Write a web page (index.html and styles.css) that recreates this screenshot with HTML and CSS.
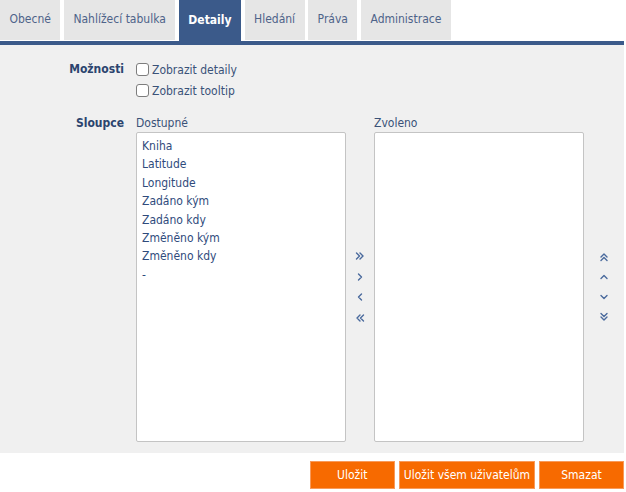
FILE: index.html
```html
<!DOCTYPE html>
<html lang="cs">
<head>
<meta charset="utf-8">
<title>Detaily</title>
<link rel="stylesheet" href="styles.css">
</head>
<body>
<div class="page">
  <nav class="tabs">
    <a class="tab">Obecné</a>
    <a class="tab">Nahlížecí tabulka</a>
    <a class="tab active">Detaily</a>
    <a class="tab">Hledání</a>
    <a class="tab">Práva</a>
    <a class="tab">Administrace</a>
  </nav>
  <div class="tabline"></div>
  <main class="panel">
    <div class="row options">
      <div class="label">Možnosti</div>
      <div class="checks">
        <label class="check"><span class="box"></span>Zobrazit detaily</label>
        <label class="check"><span class="box"></span>Zobrazit tooltip</label>
      </div>
    </div>
    <div class="row columns">
      <div class="label">Sloupce</div>
      <div class="picker">
        <div class="list-col">
          <div class="list-title">Dostupné</div>
          <ul class="listbox">
            <li>Kniha</li>
            <li>Latitude</li>
            <li>Longitude</li>
            <li>Zadáno kým</li>
            <li>Zadáno kdy</li>
            <li>Změněno kým</li>
            <li>Změněno kdy</li>
            <li>-</li>
          </ul>
        </div>
        <div class="arrows">
          <svg class="ico" viewBox="0 0 10 10"><path d="M1.5 2 L4.5 5 L1.5 8 M5 2 L8 5 L5 8"/></svg>
          <svg class="ico" viewBox="0 0 10 10"><path d="M3.5 2 L6.5 5 L3.5 8"/></svg>
          <svg class="ico" viewBox="0 0 10 10"><path d="M6.5 2 L3.5 5 L6.5 8"/></svg>
          <svg class="ico" viewBox="0 0 10 10"><path d="M5 2 L2 5 L5 8 M8.5 2 L5.5 5 L8.5 8"/></svg>
        </div>
        <div class="list-col">
          <div class="list-title">Zvoleno</div>
          <ul class="listbox"></ul>
        </div>
        <div class="arrows order">
          <svg class="ico" viewBox="0 0 10 10"><path d="M2 5 L5 2 L8 5 M2 8.5 L5 5.5 L8 8.5"/></svg>
          <svg class="ico" viewBox="0 0 10 10"><path d="M2 6.5 L5 3.5 L8 6.5"/></svg>
          <svg class="ico" viewBox="0 0 10 10"><path d="M2 3.5 L5 6.5 L8 3.5"/></svg>
          <svg class="ico" viewBox="0 0 10 10"><path d="M2 1.5 L5 4.5 L8 1.5 M2 5 L5 8 L8 5"/></svg>
        </div>
      </div>
    </div>
  </main>
  <div class="actions">
    <button class="btn">Uložit</button>
    <button class="btn">Uložit všem uživatelům</button>
    <button class="btn">Smazat</button>
  </div>
</div>
</body>
</html>
```
FILE: styles.css
```css
* { box-sizing: border-box; }
html, body { margin: 0; padding: 0; background: #fff; }
body {
  font-family: "DejaVu Sans Condensed", "DejaVu Sans", sans-serif;
  font-stretch: condensed;
  font-size: 12px;
  color: #2f4a75;
}
.page { width: 624px; }

.tabs {
  display: flex;
  gap: 3.5px;
  height: 41px;
}
.tab {
  display: flex;
  align-items: center;
  padding: 0 9.5px 2px;
  background: #e6e6e6;
  color: #4e6389;
  height: 40px;
  cursor: pointer;
}
.tab.active {
  background: #3b5a8a;
  color: #fff;
  font-weight: bold;
  height: 41px;
}
.tabline {
  height: 4px;
  background: #3b5a8a;
}

.panel {
  background: #f0f0f0;
  height: 408px;
  padding-top: 17px;
}
.row {
  display: grid;
  grid-template-columns: 124px 1fr;
  column-gap: 12px;
}
.label {
  text-align: right;
  font-weight: bold;
  color: #2b446e;
  line-height: 15px;
}
.checks {
  display: flex;
  flex-direction: column;
  gap: 6px;
}
.check {
  display: flex;
  align-items: center;
  gap: 3px;
  height: 15px;
  color: #3a5278;
}
.box {
  width: 13px;
  height: 13px;
  border: 1px solid #7d7d7d;
  border-radius: 3px;
  background: #fff;
}
.columns { margin-top: 16px; }
.columns .label { line-height: 16px; padding-top: 1px; }

.picker {
  display: grid;
  grid-template-columns: 210px 28px 210px 40px;
}
.list-col {
  display: flex;
  flex-direction: column;
}
.list-title {
  height: 16px;
  line-height: 16px;
  margin-top: 1px;
  color: #3a5278;
}
.listbox {
  margin: 0;
  margin-top: 1px;
  padding: 4px 0 0 5px;
  list-style: none;
  height: 310px;
  background: #fff;
  border: 1px solid #c4c4c4;
  border-radius: 2px;
}
.listbox li {
  height: 18.4px;
  line-height: 18.4px;
  color: #2f4b7c;
}
.arrows {
  display: flex;
  flex-direction: column;
  align-items: center;
  justify-content: center;
  gap: 10.5px;
  padding-top: 18px;
}
.arrows.order { gap: 10px; padding-right: 1px; }
.ico {
  width: 10px;
  height: 10px;
  fill: none;
  stroke: #4a6a9d;
  stroke-width: 1.4;
  stroke-linecap: round;
  stroke-linejoin: round;
}

.actions {
  display: flex;
  justify-content: flex-end;
  gap: 4px;
  margin-top: 8px;
}
.btn {
  font-family: inherit;
  font-stretch: condensed;
  font-size: 12px;
  height: 28px;
  background: #f76a00;
  color: #fff;
  border: 1px solid #f89a5a;
  padding: 0 4px;
  min-width: 85px;
}
```
